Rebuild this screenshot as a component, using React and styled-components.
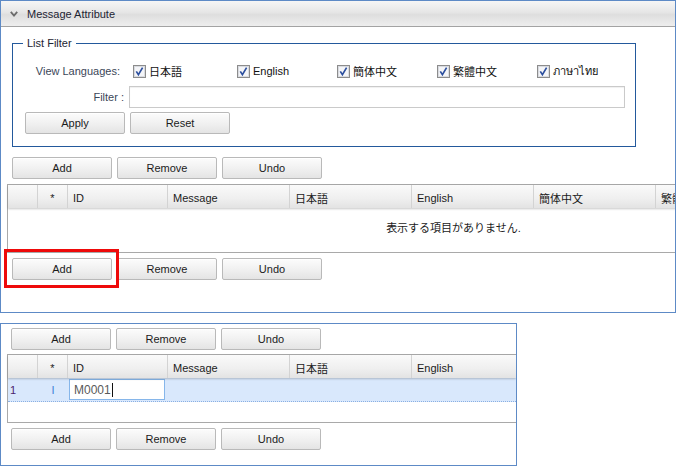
import React from 'react';
import styled, { createGlobalStyle } from 'styled-components';

const FONT = `"Liberation Sans", Arial, "Noto Sans CJK JP", "Noto Sans", sans-serif`;

const Global = createGlobalStyle`
  html, body { margin: 0; padding: 0; background: #fff; }
  body { font-family: ${FONT}; font-size: 11px; color: #222; }
  * { box-sizing: border-box; }
`;

const Page = styled.div`
  width: 676px;
  height: 466px;
  overflow: hidden;
  display: flex;
  flex-direction: column;
  align-items: flex-start;
  gap: 10px;
`;

const Panel = styled.section`
  width: ${(p) => p.$w}px;
  height: ${(p) => p.$h}px;
  border: 1px solid #5d8ac6;
  overflow: hidden;
  display: flex;
  flex-direction: column;
  flex-shrink: 0;
`;

const Header = styled.div`
  height: 26px;
  flex-shrink: 0;
  border-bottom: 1px solid #a3a3a3;
  background: linear-gradient(#f6f6f6 0%, #e6e6e6 45%, #dedede 55%, #eeeeee 100%);
  display: flex;
  align-items: center;
  padding-left: 9px;
  gap: 9px;
  color: #1d2433;
  font-size: 11px;
`;

const Fieldset = styled.fieldset`
  margin: 9px 0 0 11px;
  width: 624px;
  padding: 0;
  border: 1px solid #23599c;
  min-width: 0;
`;

const Legend = styled.legend`
  margin-left: 10px;
  padding: 0 4px;
  line-height: 14px;
  font-size: 11px;
  color: #1d2433;
`;

const FilterBody = styled.div`
  display: flex;
  flex-direction: column;
  padding: 13px 0 12px 0;
`;

const FormRow = styled.div`
  display: flex;
  align-items: center;
  height: ${(p) => p.$h || 22}px;
  margin-top: ${(p) => p.$mt || 0}px;
  padding-left: ${(p) => p.$pl || 0}px;
  gap: ${(p) => p.$gap || 0}px;
`;

const Label = styled.div`
  width: 111px;
  flex-shrink: 0;
  text-align: right;
  padding-right: ${(p) => p.$pr || 0}px;
  color: #3b4658;
  font-size: 11px;
`;

const CheckGroup = styled.div`
  display: flex;
  align-items: center;
  margin-left: 9px;
`;

const CheckItem = styled.label`
  width: ${(p) => p.$w}px;
  display: flex;
  align-items: center;
  gap: 3px;
  color: #111;
  font-size: 11px;
  white-space: nowrap;
`;

const TextBox = styled.div`
  margin-left: 5px;
  width: 496px;
  height: 22px;
  border: 1px solid #cacaca;
  background: #fff;
  box-shadow: inset 0 1px 1px #f0f0f0;
`;

const Toolbar = styled.div`
  display: flex;
  gap: ${(p) => p.$gap ?? 5}px;
  margin-top: ${(p) => p.$mt || 0}px;
  padding-left: ${(p) => p.$pl || 0}px;
  flex-shrink: 0;
`;

const Button = styled.button`
  width: 100px;
  height: 22px;
  padding: 0;
  margin: 0;
  border: 1px solid #b9b9b9;
  border-radius: 2px;
  background: linear-gradient(#fcfcfc 0%, #f1f1f1 50%, #e4e4e4 100%);
  box-shadow: inset 0 1px 0 #fff;
  font-family: ${FONT};
  font-size: 11px;
  color: #1b1b1b;
  cursor: pointer;
`;

const Highlight = styled.div`
  position: relative;
  display: flex;
  &::after {
    content: '';
    position: absolute;
    top: -9px;
    left: -8px;
    right: -7px;
    bottom: -8px;
    border: 3px solid #ee0a0a;
    pointer-events: none;
  }
`;

const Grid = styled.div`
  margin: ${(p) => p.$mt}px 0 0 6px;
  ${(p) => (p.$width ? `width: ${p.$width}px;` : 'align-self: stretch;')}
  flex-shrink: 0;
  border-top: 1px solid #a9a9a9;
  border-left: 1px solid #a9a9a9;
  border-bottom: 1px solid #a9a9a9;
  display: flex;
  flex-direction: column;
`;

const HeadRow = styled.div`
  display: flex;
  height: 23px;
  background: linear-gradient(#fafafa 0%, #efefef 60%, #e3e3e3 100%);
  box-shadow: 0 1px 2px rgba(0, 0, 0, 0.22);
  position: relative;
  z-index: 1;
`;

const HeadCell = styled.div`
  width: ${(p) => p.$w}px;
  flex-shrink: 0;
  border-right: 1px solid #d3d3d3;
  display: flex;
  align-items: center;
  justify-content: ${(p) => (p.$center ? 'center' : 'flex-start')};
  padding-left: ${(p) => (p.$center ? 0 : 5)}px;
  padding-top: 2px;
  font-size: 11px;
  color: #1b1b1b;
  white-space: nowrap;
  overflow: hidden;
`;

const Body = styled.div`
  height: ${(p) => p.$h}px;
  display: flex;
  flex-direction: column;
`;

const EmptyText = styled.div`
  text-align: center;
  padding-top: 12px;
  line-height: 16px;
  font-size: 11px;
  color: #1b1b1b;
`;

const DataRow = styled.div`
  display: flex;
  height: 24px;
  background: #d9e8fc;
  border-bottom: 1px dotted #8bb0e2;
`;

const Cell = styled.div`
  width: ${(p) => p.$w}px;
  flex-shrink: 0;
  display: flex;
  align-items: center;
  justify-content: ${(p) => (p.$center ? 'center' : 'flex-start')};
  padding-left: ${(p) => p.$pl ?? 0}px;
  color: ${(p) => p.$color || '#1b1b1b'};
  font-size: 11px;
`;

const EditBox = styled.div`
  width: 96px;
  height: 21px;
  margin-left: 1px;
  border: 1px solid #86b6ea;
  background: #fff;
  display: flex;
  align-items: center;
  padding-left: 4px;
  color: #5a5a5a;
  font-size: 12px;
`;

const Caret = styled.span`
  display: inline-block;
  width: 1px;
  height: 14px;
  background: #111;
  margin-left: 1px;
`;

const Chevron = () => (
  <svg width="8" height="6" viewBox="0 0 8 6">
    <path d="M0.8 0.8 L4 4.6 L7.2 0.8" fill="none" stroke="#6c6c6c" strokeWidth="1.8" />
  </svg>
);

const CheckBox = () => (
  <svg width="13" height="13" viewBox="0 0 13 13" style={{ flexShrink: 0 }}>
    <rect x="0.5" y="0.5" width="12" height="12" fill="#e9ebef" stroke="#8c8c8c" />
    <rect x="1.5" y="1.5" width="10" height="10" fill="#f4f5f8" stroke="#d9dbe0" />
    <path d="M3.3 6.4 L5.4 9.6 L9.6 2.6" fill="none" stroke="#2c4f9e" strokeWidth="1.7" />
  </svg>
);

const columnsTop = [
  { w: 30, t: '' },
  { w: 30, t: '*', c: true },
  { w: 100, t: 'ID' },
  { w: 122, t: 'Message' },
  { w: 122, t: '日本語' },
  { w: 122, t: 'English' },
  { w: 122, t: '簡体中文' },
  { w: 122, t: '繁體中文' },
  { w: 122, t: 'ภาษาไทย' },
];

const columnsBottom = columnsTop.slice(0, 6);

const GridHeader = ({ cols }) => (
  <HeadRow>
    {cols.map((c, i) => (
      <HeadCell key={i} $w={c.w} $center={c.c}>
        {c.t}
      </HeadCell>
    ))}
  </HeadRow>
);

const Buttons = ({ highlight, mt, pl }) => (
  <Toolbar $mt={mt} $pl={pl}>
    {highlight ? (
      <Highlight>
        <Button>Add</Button>
      </Highlight>
    ) : (
      <Button>Add</Button>
    )}
    <Button>Remove</Button>
    <Button>Undo</Button>
  </Toolbar>
);

const langs = [
  { t: '日本語', w: 104 },
  { t: 'English', w: 100 },
  { t: '簡体中文', w: 100 },
  { t: '繁體中文', w: 100 },
  { t: 'ภาษาไทย', w: 100 },
];

export default function App() {
  return (
    <>
      <Global />
      <Page>
        <Panel $w={676} $h={313}>
          <Header>
            <Chevron />
            <span>Message Attribute</span>
          </Header>
          <Fieldset>
            <Legend>List Filter</Legend>
            <FilterBody>
              <FormRow $h={16}>
                <Label $pr={4}>View Languages:</Label>
                <CheckGroup>
                  {langs.map((l) => (
                    <CheckItem key={l.t} $w={l.w}>
                      <CheckBox />
                      {l.t}
                    </CheckItem>
                  ))}
                </CheckGroup>
              </FormRow>
              <FormRow $mt={7}>
                <Label>Filter :</Label>
                <TextBox />
              </FormRow>
              <FormRow $mt={4} $pl={12} $gap={5}>
                <Button>Apply</Button>
                <Button>Reset</Button>
              </FormRow>
            </FilterBody>
          </Fieldset>
          <Buttons mt={10} pl={11} />
          <Grid $mt={5} $width={892}>
            <GridHeader cols={columnsTop} />
            <Body $h={44}>
              <EmptyText>表示する項目がありません.</EmptyText>
            </Body>
          </Grid>
          <Buttons mt={5} pl={11} highlight />
        </Panel>

        <Panel $w={517} $h={143}>
          <Buttons mt={4} pl={10} />
          <Grid $mt={4}>
            <GridHeader cols={columnsBottom} />
            <Body $h={44}>
              <DataRow>
                <Cell $w={30} $pl={2} $color="#4a1d6e">1</Cell>
                <Cell $w={30} $center $color="#3f82d8">I</Cell>
                <Cell $w={100}>
                  <EditBox>
                    M0001
                    <Caret />
                  </EditBox>
                </Cell>
                <Cell $w={122} />
                <Cell $w={122} />
                <Cell $w={122} />
              </DataRow>
            </Body>
          </Grid>
          <Buttons mt={5} pl={10} />
        </Panel>
      </Page>
    </>
  );
}
